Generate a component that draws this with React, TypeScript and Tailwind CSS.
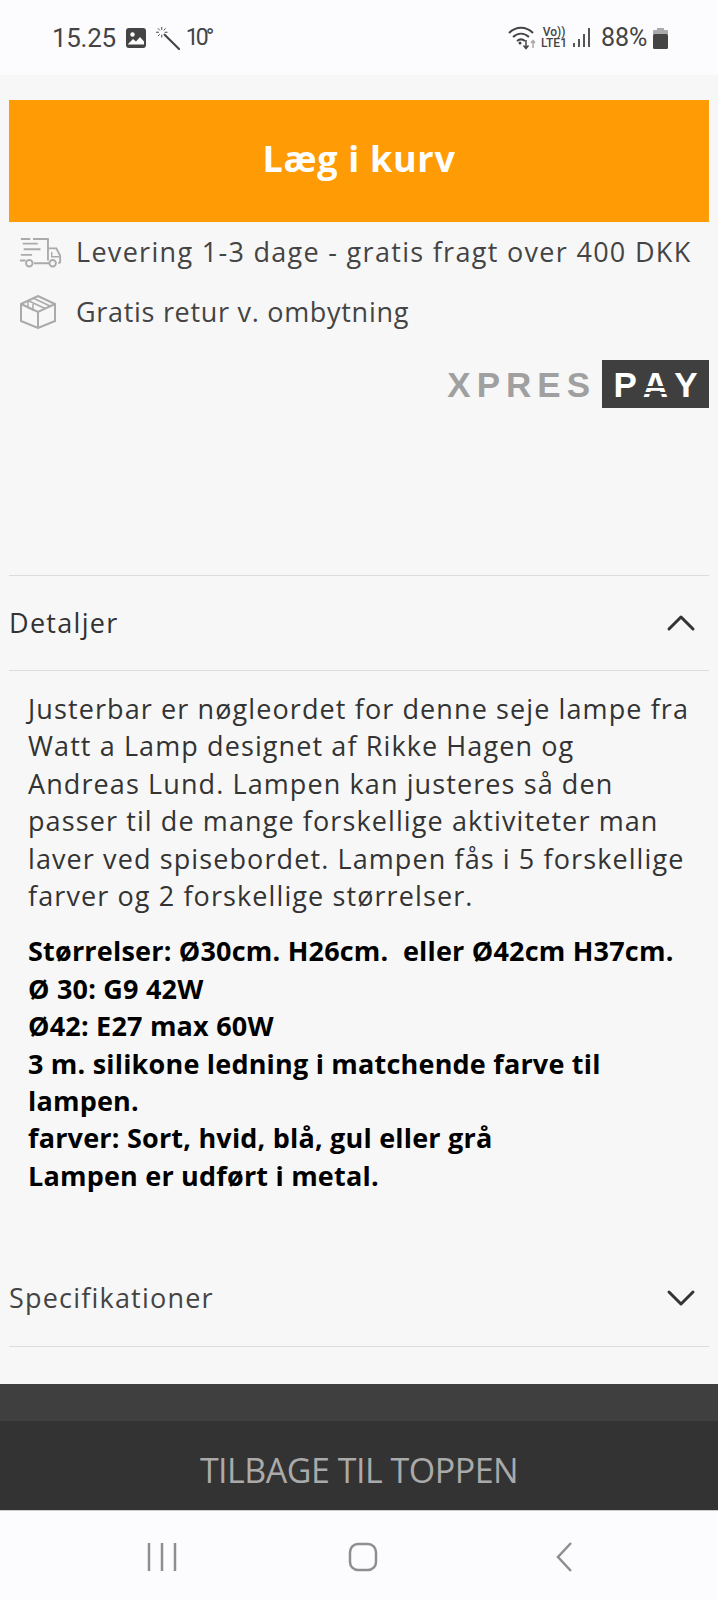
import React from 'react';
import { ChevronUp, ChevronDown } from 'lucide-react';

const StatusBar = () => (
  <div className="h-[75px] bg-[#fcfcfe] flex items-center justify-between pl-[52px] pr-[50px] pt-[1px] text-[#444] font-['Roboto',sans-serif]">
    <div className="flex items-center">
      <span className="text-[26px] tracking-[-0.3px]">15.25</span>
      <svg className="ml-[10px]" width="20" height="20" viewBox="0 0 20 20">
        <rect width="20" height="20" rx="3" fill="#444" />
        <circle cx="6.500" cy="6.500" r="2.200" fill="#fcfcfe" />
        <path d="M2 16l5-5 3 2.500 4-4.500 4 4.500v3H2z" fill="#fcfcfe" />
      </svg>
      <svg className="ml-[9px]" width="26" height="25" viewBox="0 0 27 26" fill="none" stroke="#444">
        <path d="M10 9l15 15" strokeWidth="2.200" strokeLinecap="round" />
        <path d="M7 1v3M7 9v3M1 6.500h3M10 6.500h3M3 2.500l2 2M11 2.500l-2 2M3 10.500l2-2" strokeWidth="1" />
      </svg>
      <span className="text-[23px] tracking-[-3px] ml-[5px]">10°</span>
    </div>
    <div className="flex items-center">
      <svg width="30" height="24" viewBox="0 0 30 24" fill="none" stroke="#444" strokeWidth="2">
        <path d="M1 7c7-7 17-7 24 0M5 11c5-4.500 11-4.500 16 0M9 15c2.500-2 5.500-2 8 0" />
        <circle cx="12" cy="17" r="1.500" fill="#444" stroke="none" />
        <path d="M18 14v8M15.500 19.500l2.500 3 2.500-3" strokeWidth="1.500" />
        <path d="M25 22v-7M23 17l2-2.500 2 2.500" strokeWidth="1.500" stroke="#aaa" />
      </svg>
      <div className="flex flex-col items-center w-[24px] ml-[4px] text-[12px] leading-[11px] font-medium">
        <span>Vo))</span>
        <span>LTE1</span>
      </div>
      <svg className="ml-[7px]" width="18" height="20" viewBox="0 0 18 20" fill="#555">
        <rect x="0" y="15" width="2" height="4" />
        <rect x="5" y="11" width="2" height="8" />
        <rect x="10" y="6" width="2" height="13" />
        <rect x="15" y="0" width="2" height="19" />
      </svg>
      <span className="text-[25px] ml-[10px] w-[46px] whitespace-nowrap">88%</span>
      <svg className="ml-[6px]" width="15" height="21" viewBox="0 0 15 21">
        <rect x="4" y="0" width="7" height="3" fill="#aaa" />
        <rect x="0" y="2" width="15" height="5" rx="1" fill="#aaa" />
        <rect x="0" y="6" width="15" height="15" rx="1.500" fill="#444" />
      </svg>
    </div>
  </div>
);

const Truck = () => (
  <svg width="43" height="32" viewBox="0 0 46 34" fill="none" stroke="#aaa" strokeWidth="2">
    <path d="M2 2h10M15 2h16v23M4 7h16M5 13h18M2 19h12M1 25h6" />
    <path d="M31 12h9l4 8v7l-2 1M16 28h16" />
    <path d="M35 16v5h8" strokeWidth="1.500" />
    <circle cx="11" cy="28" r="3.500" />
    <circle cx="36" cy="28" r="3.500" />
  </svg>
);

const Box = () => (
  <svg width="38" height="34" viewBox="0 0 38 34" fill="none" stroke="#aaa" strokeWidth="2">
    <path d="M2 9l17-8 17 8v17l-17 7-17-7z" />
    <path d="M2 9l17 8 17-8M19 17v16" />
    <path d="M9 5.500l17 8M14 3l17 8M9 5.500v7l5 2.500v-6" strokeWidth="1.500" />
  </svg>
);

const Divider = () => <div className="h-px bg-[#dcdcdc]" />;

export default function App() {
  return (
    <div className="w-[718px] h-[1600px] bg-[#f7f7f7] flex flex-col overflow-hidden font-['Open_Sans','Noto_Sans',sans-serif] text-[#444]">
      <StatusBar />

      <div className="px-[9px] pt-[25px] flex-1">
        <button className="w-full h-[122px] pb-[4px] bg-[#ff9b04] text-white text-[36px] font-bold tracking-[0.7px]">
          Læg i kurv
        </button>

        <div className="flex items-center h-[61px] pl-[10px]">
          <div className="w-[46px]"><Truck /></div>
          <span className="ml-[11px] text-[27px] tracking-[1.3px] whitespace-nowrap">Levering 1-3 dage - gratis fragt over 400 DKK</span>
        </div>
        <div className="flex items-center h-[58px] pl-[10px]">
          <div className="w-[46px]"><Box /></div>
          <span className="ml-[11px] text-[27px] tracking-[0.7px]">Gratis retur v. ombytning</span>
        </div>

        <div className="flex justify-end items-center mt-[19px] font-['Liberation_Sans',sans-serif] font-bold">
          <span className="text-[#a0a0a0] text-[35px] tracking-[6px] leading-none mr-[6px]">XPRES</span>
          <span className="bg-[#3f3f3f] text-white text-[35px] tracking-[6px] leading-none h-[48px] w-[107px] pl-[6px] flex items-center justify-center">
            P
            <span className="relative inline-block">
              A
              <span className="absolute left-0 right-[6px] top-[19px] h-[2px] bg-[#3f3f3f]" />
              <span className="absolute left-0 right-[6px] top-[25px] h-[2px] bg-[#3f3f3f]" />
            </span>
            Y
          </span>
        </div>

        <div className="mt-[167px]"><Divider /></div>
        <div className="flex items-center justify-between h-[94px] pr-[4px]">
          <span className="text-[27px] tracking-[1.3px] text-[#333]">Detaljer</span>
          <ChevronUp size={48} strokeWidth={1.5} color="#333" />
        </div>
        <Divider />

        <div className="pt-[19px] pl-[19px] pr-[10px] text-[27px] leading-[37.4px] tracking-[1.1px] text-[#333] whitespace-nowrap">
          <p>
            Justerbar er nøgleordet for denne seje lampe fra<br />
            Watt a Lamp designet af Rikke Hagen og<br />
            Andreas Lund. Lampen kan justeres så den<br />
            passer til de mange forskellige aktiviteter man<br />
            laver ved spisebordet. Lampen fås i 5 forskellige<br />
            farver og 2 forskellige størrelser.
          </p>
          <p className="mt-[18px] font-bold text-black tracking-[0.2px]">
            Størrelser: Ø30cm. H26cm.&nbsp; eller Ø42cm H37cm.<br />
            Ø 30: G9 42W<br />
            Ø42: E27 max 60W<br />
            3 m. silikone ledning i matchende farve til<br />
            lampen.<br />
            farver: Sort, hvid, blå, gul eller grå<br />
            Lampen er udført i metal.
          </p>
        </div>

        <div className="flex items-center justify-between h-[96px] mt-[56px] pr-[4px]">
          <span className="text-[27px] tracking-[1.2px]">Specifikationer</span>
          <ChevronDown size={48} strokeWidth={1.5} color="#333" />
        </div>
        <Divider />
      </div>

      <div className="h-[37px] bg-[#3f3f3f]" />
      <div className="h-[89px] pt-[10px] bg-[#333] flex items-center justify-center text-[#aaa] text-[34px] tracking-[-0.5px]">
        TILBAGE TIL TOPPEN
      </div>

      <div className="h-[90px] bg-[#fcfcfe] border-t border-[#ccc] flex items-center pl-[147px] pt-[2px]">
        <svg width="30" height="30" viewBox="0 0 30 30" stroke="#8e8e8e" strokeWidth="2.500"><path d="M2 1v28M15 1v28M28 1v28" /></svg>
        <svg className="ml-[171px]" width="30" height="30" viewBox="0 0 30 30" fill="none" stroke="#8e8e8e" strokeWidth="2.500"><rect x="2" y="2" width="26" height="26" rx="8" /></svg>
        <svg className="ml-[177px]" width="20" height="32" viewBox="0 0 20 32" fill="none" stroke="#8e8e8e" strokeWidth="2.500"><path d="M16 2L3 16l13 14" /></svg>
      </div>
    </div>
  );
}
